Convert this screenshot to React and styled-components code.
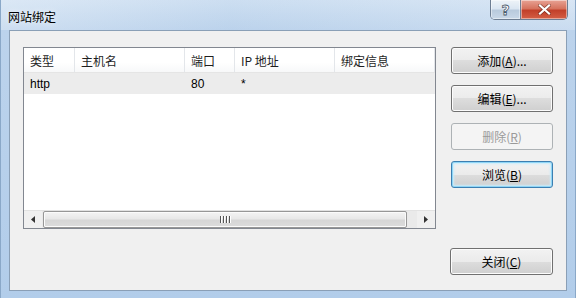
import React from "react";
import styled, { createGlobalStyle } from "styled-components";

const GlobalStyle = createGlobalStyle`
  html, body {
    margin: 0;
    padding: 0;
    background: #5b6f86;
  }
  body {
    font-family: "Liberation Sans", "Noto Sans CJK SC", sans-serif;
    font-size: 12px;
    color: #000;
  }
`;

const Window = styled.div`
  width: 576px;
  height: 298px;
  box-sizing: border-box;
  padding: 0 8px 7px 8px;
  display: flex;
  flex-direction: column;
  background: linear-gradient(180deg, #cfe0f2 0px, #bcd3ec 30px, #b2cdea 100%);
  border-left: 1px solid #8aa8c8;
  border-right: 1px solid #8aa8c8;
`;

const TitleBar = styled.div`
  height: 30px;
  display: flex;
  justify-content: space-between;
  align-items: flex-start;
  background: linear-gradient(90deg, rgba(255,255,255,0.25), rgba(180,205,232,0.1) 40%, rgba(255,255,255,0.2));
  margin: 0 -8px;
  padding: 0 7px 0 7px;
`;

const Title = styled.div`
  padding-top: 8px;
  font-size: 12px;
  font-family: "Noto Sans CJK SC", sans-serif;
  text-shadow: 0 0 6px rgba(255, 255, 255, 0.9);
`;

const Caption = styled.div`
  display: flex;
  border: 1px solid #6d7d92;
  border-top: none;
  border-radius: 0 0 5px 5px;
  overflow: hidden;
  height: 19px;
`;

const CapButton = styled.div`
  width: ${(p) => p.$w}px;
  display: flex;
  align-items: center;
  justify-content: center;
  background: ${(p) =>
    p.$red
      ? "linear-gradient(180deg, #e8a395 0%, #d6735e 45%, #c2402a 55%, #d45f45 100%)"
      : "linear-gradient(180deg, #eef3f8 0%, #dbe6f2 45%, #b9cadd 55%, #c9d8e8 100%)"};
  border-left: ${(p) => (p.$red ? "1px solid #6d7d92" : "none")};
  box-shadow: inset 0 0 0 1px rgba(255, 255, 255, 0.45);
`;

const HelpMark = styled.span`
  color: #ffffff;
  font-weight: bold;
  -webkit-text-stroke: 0.8px #4b5a6b;
  font-family: "DejaVu Sans", sans-serif;
  font-size: 14px;
  line-height: 1;
`;

const Client = styled.div`
  flex: 1;
  display: flex;
  border: 1px solid #8a9fb6;
  background: #f0f0f0;
  padding: 16px 14px 15px 13px;
`;

const ListView = styled.div`
  width: 415px;
  height: 182px;
  box-sizing: border-box;
  border: 1px solid #828790;
  background: #fff;
  display: flex;
  flex-direction: column;
`;

const Header = styled.div`
  height: 24px;
  display: flex;
  background: linear-gradient(180deg, #ffffff 0%, #ffffff 60%, #f7f8f9 100%);
  border-bottom: 1px solid #e5e5e5;
`;

const HeadCell = styled.div`
  width: ${(p) => p.$w}px;
  box-sizing: border-box;
  padding-left: 6px;
  display: flex;
  align-items: center;
  border-right: 1px solid #e3e6ea;
  color: #1e1e1e;
  font-family: "Noto Sans CJK SC", sans-serif;
`;

const Row = styled.div`
  height: 21px;
  display: flex;
  background: #ececec;
`;

const Cell = styled.div`
  width: ${(p) => p.$w}px;
  box-sizing: border-box;
  padding-left: 6px;
  display: flex;
  align-items: center;
`;

const Spacer = styled.div`
  flex: 1;
`;

const HScroll = styled.div`
  height: 17px;
  display: flex;
  background: #eaeaea;
  border-top: 1px solid #e2e2e2;
`;

const Arrow = styled.div`
  width: 18px;
  display: flex;
  align-items: center;
  justify-content: center;
  background: #f0f0f0;
`;

const Track = styled.div`
  flex: 1;
  display: flex;
  align-items: stretch;
  padding: 0 10px 0 1px;
`;

const Thumb = styled.div`
  flex: 1;
  border: 1px solid #979797;
  border-radius: 2px;
  background: linear-gradient(180deg, #f4f4f4 0%, #e8e8e8 45%, #d6d6d6 55%, #dcdcdc 100%);
  box-shadow: inset 0 0 0 1px #fbfbfb;
  display: flex;
  align-items: center;
  justify-content: center;
  gap: 2px;
`;

const Grip = styled.span`
  width: 1px;
  height: 7px;
  background: #555;
  box-shadow: 1px 0 0 #fff;
`;

const Side = styled.div`
  margin-left: 14px;
  display: flex;
  flex-direction: column;
  align-items: flex-end;
  gap: 11px;
  flex: 1;
`;

const Button = styled.div`
  width: ${(p) => (p.$wide ? 103 : 102)}px;
  height: 27px;
  box-sizing: border-box;
  display: flex;
  align-items: center;
  justify-content: center;
  border-radius: 3px;
  font-family: "Noto Sans CJK SC", sans-serif;
  font-size: 12px;
  margin-top: ${(p) => (p.$bottom ? "auto" : "0")};
  border: 1px solid ${(p) => (p.$disabled ? "#adb2b5" : p.$default ? "#3c7fb1" : "#707070")};
  color: ${(p) => (p.$disabled ? "#9a9a9a" : "#000")};
  background: ${(p) =>
    p.$disabled
      ? "#f4f4f4"
      : "linear-gradient(180deg, #f2f2f2 0%, #ebebeb 50%, #dddddd 50%, #cfcfcf 100%)"};
  box-shadow: ${(p) =>
    p.$default
      ? "inset 0 0 0 1px #8fd5f6, inset 0 0 2px 2px #c9ecfb"
      : p.$disabled
      ? "none"
      : "inset 0 0 0 1px #fcfcfc"};

  u {
    text-decoration: underline;
    text-underline-offset: 1px;
  }
`;

const columns = [
  { key: "type", label: "类型", w: 51 },
  { key: "host", label: "主机名", w: 110 },
  { key: "port", label: "端口", w: 50 },
  { key: "ip", label: "IP 地址", w: 100 },
  { key: "info", label: "绑定信息", w: 100 },
];

const rows = [{ type: "http", host: "", port: "80", ip: "*", info: "" }];

export default function App() {
  return (
    <>
      <GlobalStyle />
      <Window>
        <TitleBar>
          <Title>网站绑定</Title>
          <Caption>
            <CapButton $w={29}>
              <HelpMark>?</HelpMark>
            </CapButton>
            <CapButton $w={46} $red>
              <svg width="13" height="11" viewBox="0 0 13 11">
                <path
                  d="M2 1.5 L11 9.5 M11 1.5 L2 9.5"
                  stroke="#4a1810"
                  strokeWidth="3.6"
                  strokeLinecap="square"
                  opacity="0.55"
                />
                <path
                  d="M2 1.5 L11 9.5 M11 1.5 L2 9.5"
                  stroke="#fff"
                  strokeWidth="2.2"
                  strokeLinecap="square"
                />
              </svg>
            </CapButton>
          </Caption>
        </TitleBar>
        <Client>
          <ListView>
            <Header>
              {columns.map((c) => (
                <HeadCell key={c.key} $w={c.w}>
                  {c.label}
                </HeadCell>
              ))}
            </Header>
            {rows.map((r, i) => (
              <Row key={i}>
                {columns.map((c) => (
                  <Cell key={c.key} $w={c.w}>
                    {r[c.key]}
                  </Cell>
                ))}
              </Row>
            ))}
            <Spacer />
            <HScroll>
              <Arrow>
                <svg width="4" height="7" viewBox="0 0 4 7">
                  <path d="M4 0 L0 3.5 L4 7 Z" fill="#333" />
                </svg>
              </Arrow>
              <Track>
                <Thumb>
                  <Grip />
                  <Grip />
                  <Grip />
                  <Grip />
                </Thumb>
              </Track>
              <Arrow>
                <svg width="4" height="7" viewBox="0 0 4 7">
                  <path d="M0 0 L4 3.5 L0 7 Z" fill="#333" />
                </svg>
              </Arrow>
            </HScroll>
          </ListView>
          <Side>
            <Button>
              添加(<u>A</u>)...
            </Button>
            <Button>
              编辑(<u>E</u>)...
            </Button>
            <Button $disabled>
              删除(<u>R</u>)
            </Button>
            <Button $default>
              浏览(<u>B</u>)
            </Button>
            <Button $bottom $wide>
              关闭(<u>C</u>)
            </Button>
          </Side>
        </Client>
      </Window>
    </>
  );
}
